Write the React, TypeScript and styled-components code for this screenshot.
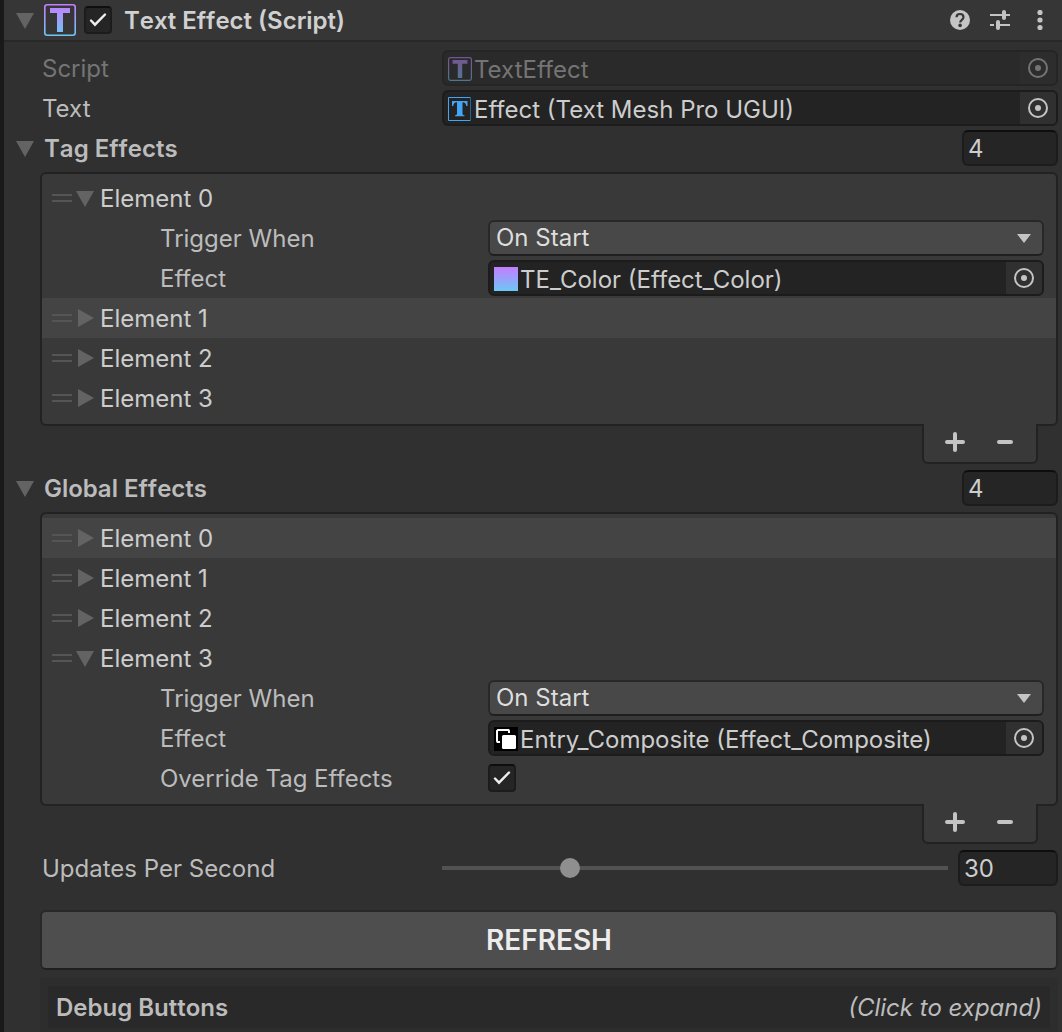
import React, { useId, useState } from "react";
import styled, { createGlobalStyle } from "styled-components";

const GlobalStyle = createGlobalStyle`
  *, *::before, *::after { box-sizing: border-box; }
  body { margin: 0; background: #303030; }
  button, input, select {
    margin: 0;
    padding: 0;
    border: 0;
    background: none;
    color: inherit;
    font: inherit;
    text-align: left;
  }
  button, select { cursor: pointer; }
  svg { display: block; flex: none; }
`;

const Panel = styled.main`
  min-height: 100vh;
  border-left: 4px solid #191919;
  background: #303030;
  color: #bcbcbc;
  font-family: Inter, "Liberation Sans", sans-serif;
  font-size: 24px;
  line-height: 32px;
`;

const Header = styled.header`
  display: flex;
  align-items: center;
  height: 42px;
  padding: 0 12px;
  border-bottom: 2px solid #282828;
  background: #363636;
`;

const FoldButton = styled.button`
  display: flex;
  align-items: center;
  justify-content: center;
  width: 18px;
  height: 32px;
  flex: none;
`;

const HeaderIdentity = styled.div`
  display: flex;
  align-items: center;
  gap: 8px;
  padding-left: 10px;
`;

const Title = styled.h1`
  margin: 0;
  padding: 2px 0 0 12px;
  flex: 1;
  color: #d0d0d0;
  font-size: 24px;
  font-weight: 600;
  font-kerning: none;
`;

const HeaderActions = styled.div`
  display: flex;
  gap: 20px;
`;

const IconButton = styled.button`
  display: flex;
  width: 20px;
  height: 20px;
  color: #c4c4c4;
`;

const Content = styled.div`
  padding: 6px 4px 0 36px;
`;

const Row = styled.div`
  display: grid;
  grid-template-columns: 402px minmax(0, 1fr);
  align-items: center;
  height: 40px;
`;

const Label = styled.label<{ $dim?: boolean }>`
  padding: 2px 0 0 2px;
  color: ${(p) => (p.$dim ? "#747474" : "#bcbcbc")};
`;

const FieldBox = styled.div<{ $dim?: boolean }>`
  display: flex;
  height: 36px;
  overflow: hidden;
  border: 2px solid ${(p) => (p.$dim ? "#252525" : "#1c1c1c")};
  border-radius: 6px;
  background: ${(p) => (p.$dim ? "#2a2a2a" : "#232323")};
  color: ${(p) => (p.$dim ? "#747474" : "#cdcdcd")};
`;

const FieldValue = styled.button`
  display: flex;
  align-items: center;
  gap: 2px;
  flex: 1;
  min-width: 0;
  padding: 2px 0 0 4px;
  white-space: nowrap;
`;

const FieldText = styled.span`
  padding-top: 2px;
`;

const Picker = styled.button<{ $dim?: boolean }>`
  display: flex;
  align-items: center;
  justify-content: center;
  width: 36px;
  flex: none;
  background: ${(p) => (p.$dim ? "#2d2d2d" : "#303030")};
  color: ${(p) => (p.$dim ? "#747474" : "#c4c4c4")};
`;

const SectionHead = styled.div`
  display: flex;
  align-items: center;
  height: 40px;
  margin-left: -24px;
`;

const SectionTitle = styled.h2`
  flex: 1;
  margin: 0;
  padding: 2px 0 0 10px;
  font-size: 24px;
  font-weight: 600;
  font-kerning: none;
`;

const NumberBox = styled.input<{ $width: number }>`
  width: ${(p) => p.$width}px;
  height: 36px;
  padding-left: 4px;
  border: 2px solid #1c1c1c;
  border-top-color: #0e0e0e;
  border-radius: 6px;
  background: #252525;
  color: #cdcdcd;
`;

const ListBlock = styled.section`
  padding: 4px 0;
`;

const ListBody = styled.ul`
  margin: 0;
  padding: 4px 0 6px;
  list-style: none;
  border: 2px solid #222222;
  border-radius: 6px;
  background: #393939;
`;

const ItemHead = styled.div<{ $selected: boolean }>`
  display: flex;
  align-items: center;
  height: 40px;
  padding-left: 10px;
  background: ${(p) => (p.$selected ? "#444444" : "transparent")};
  color: #cdcdcd;
`;

const Handle = styled.span`
  width: 20px;
  height: 8px;
  margin-right: 4px;
  border: solid #555555;
  border-width: 2px 0;
  cursor: grab;
`;

const ItemName = styled.span`
  padding: 2px 0 0 6px;
`;

const PropertyRow = styled.div`
  display: grid;
  grid-template-columns: 330px minmax(0, 1fr);
  align-items: center;
  height: 40px;
  padding: 0 12px 0 116px;
`;

const Overlap = styled.div`
  display: grid;
  align-items: center;

  & > * { grid-area: 1 / 1; }
  & > svg { pointer-events: none; }
`;

const SelectWrap = styled(Overlap)`
  & > svg {
    justify-self: end;
    margin-right: 13px;
  }
`;

const Select = styled.select`
  appearance: none;
  width: 100%;
  height: 36px;
  padding: 0 36px 2px 6px;
  border: 2px solid #282828;
  border-bottom-color: #1f1f1f;
  border-radius: 6px;
  background: #484848;
  color: #dedede;
`;

const CheckWrap = styled(Overlap)`
  width: 28px;
  justify-items: center;
`;

const CheckInput = styled.input`
  appearance: none;
  width: 28px;
  height: 28px;
  border: 2px solid #1c1c1c;
  border-top-color: #0e0e0e;
  border-radius: 4px;
  background: #252525;

  &:not(:checked) + svg { visibility: hidden; }
`;

const ListFooter = styled.div`
  display: flex;
  width: 116px;
  height: 40px;
  margin: -2px 20px 0 auto;
  padding: 0 6px 2px;
  position: relative;
  border: 2px solid #222222;
  border-top: 0;
  border-radius: 0 0 6px 6px;
  background: #393939;
  color: #c4c4c4;
`;

const FooterButton = styled.button`
  display: flex;
  flex: 1 1 0;
  align-items: center;
  justify-content: center;
`;

const SliderRow = styled.div`
  display: flex;
  align-items: center;
  gap: 10px;
`;

const Slider = styled.input`
  appearance: none;
  flex: 1;
  min-width: 0;
  height: 20px;

  &::-webkit-slider-runnable-track {
    height: 4px;
    background: #525252;
  }
  &::-webkit-slider-thumb {
    appearance: none;
    width: 20px;
    height: 20px;
    margin-top: -8px;
    border-radius: 50%;
    background: #8f8f8f;
  }
`;

const RefreshButton = styled.button`
  display: block;
  width: 100%;
  height: 60px;
  margin-top: 22px;
  border: 2px solid #282828;
  border-bottom-color: #1f1f1f;
  border-radius: 6px;
  background: #4e4e4e;
  color: #ececec;
  font-size: 28px;
  font-weight: 600;
  text-align: center;
`;

const DebugBox = styled.section`
  margin-top: 8px;
  padding: 8px 8px 4px;
  background: #2d2d2d;
`;

const DebugToggle = styled.button`
  display: flex;
  align-items: center;
  justify-content: space-between;
  width: 100%;
  height: 42px;
  padding: 2px 8px 0;
  background: #292929;
`;

const DebugTitle = styled.strong`
  font-weight: 600;
  font-kerning: none;
`;

const DebugHint = styled.em`
  font-style: italic;
`;

function Fold({ open, label, onClick }: { open: boolean; label: string; onClick: () => void }) {
  return (
    <FoldButton type="button" aria-label={label} aria-expanded={open} onClick={onClick}>
      <svg width="18" height="18" viewBox="0 0 18 18" fill="#636363">
        <path d={open ? "M0 2h18L9 18z" : "M2 0v18l16-9z"} />
      </svg>
    </FoldButton>
  );
}

function ScriptIcon({ size, faded }: { size: number; faded?: boolean }) {
  const id = useId();
  return (
    <svg width={size} height={size} viewBox="0 0 32 32" opacity={faded ? 0.5 : 1}>
      <defs>
        <linearGradient id={id} gradientUnits="userSpaceOnUse" x1="0" y1="0" x2="0" y2="32">
          <stop offset="0" stopColor="#c57cff" />
          <stop offset="1" stopColor="#6cc8f5" />
        </linearGradient>
      </defs>
      <rect x="0.8" y="0.8" width="30.4" height="30.4" rx="2.5" fill="none" stroke={`url(#${id})`} strokeWidth="1.6" />
      <path d="M6 4h20v5h-7v19h-6V9H6z" fill={`url(#${id})`} />
    </svg>
  );
}

function TextMeshIcon() {
  return (
    <svg width="24" height="24" viewBox="0 0 24 24">
      <path d="M22.500.5H.5v23h22" fill="none" stroke="#42a5f5" />
      <path d="M22.500 0v24" stroke="#28628f" />
      <path
        d="M4 4h15.500v5h-1.200C18 6.500 17 5.300 14.500 5.200V16.500c0 1.300.6 1.700 2 1.800v1H7v-1c1.400-.1 2-.5 2-1.800V5.200C6.500 5.300 5.500 6.500 5.200 9H4z"
        fill="#42a5f5"
      />
    </svg>
  );
}

function GradientIcon() {
  const id = useId();
  return (
    <svg width="24" height="24" viewBox="0 0 24 24">
      <defs>
        <linearGradient id={id} x1="0" y1="0" x2="0" y2="1">
          <stop offset="0" stopColor="#c57cff" />
          <stop offset="1" stopColor="#6cc8f5" />
        </linearGradient>
      </defs>
      <rect width="24" height="24" fill={`url(#${id})`} />
    </svg>
  );
}

function CompositeIcon() {
  return (
    <svg width="24" height="24" viewBox="0 0 24 24">
      <rect width="24" height="24" fill="#000" />
      <path d="M6 15H3.500L3 14V4l1-1h10.500l.5 1v2" fill="none" stroke="#fff" strokeWidth="2" />
      <rect x="8" y="8" width="14" height="14" rx="1.500" fill="#fff" />
    </svg>
  );
}

function TargetIcon() {
  return (
    <svg width="20" height="20" viewBox="0 0 20 20">
      <circle cx="10" cy="10" r="9" fill="none" stroke="currentColor" strokeWidth="2" />
      <circle cx="10" cy="10" r="3" fill="currentColor" />
    </svg>
  );
}

function HelpIcon() {
  return (
    <svg width="20" height="20" viewBox="0 0 20 20">
      <circle cx="10" cy="10" r="10" fill="currentColor" />
      <path d="M6.500 7.300C6.500 5 8 4 10 4s3.500 1.200 3.500 3.200c0 2.600-3.300 2.600-3.300 5.300" fill="none" stroke="#363636" strokeWidth="2.200" />
      <circle cx="10.100" cy="15.400" r="1.800" fill="#363636" />
    </svg>
  );
}

function PresetIcon() {
  return (
    <svg width="20" height="20" viewBox="0 0 20 20" stroke="currentColor" fill="none">
      <path d="M0 5h12M16 5h4M0 15h4M9 15h11" strokeWidth="2" />
      <path d="M14 2v6M8 12v6" strokeWidth="4" strokeLinecap="round" />
    </svg>
  );
}

function MenuIcon() {
  return (
    <svg width="20" height="20" viewBox="0 0 20 20" fill="currentColor">
      <circle cx="10" cy="2.500" r="2.600" />
      <circle cx="10" cy="10" r="2.600" />
      <circle cx="10" cy="17.500" r="2.600" />
    </svg>
  );
}

function Checkbox({ id, label }: { id?: string; label?: string }) {
  return (
    <CheckWrap>
      <CheckInput type="checkbox" id={id} aria-label={label} defaultChecked />
      <svg width="18" height="16" viewBox="0 0 18 16">
        <path d="M2 8.500l4 4.200L16 2.500" fill="none" stroke="#f0f0f0" strokeWidth="2.400" strokeLinecap="round" />
      </svg>
    </CheckWrap>
  );
}

type ObjectFieldProps = { id: string; icon: React.ReactNode; value: string; dim?: boolean };

function ObjectField({ id, icon, value, dim }: ObjectFieldProps) {
  return (
    <FieldBox $dim={dim}>
      <FieldValue id={id} type="button" disabled={dim}>
        {icon}
        <FieldText>{value}</FieldText>
      </FieldValue>
      <Picker type="button" $dim={dim} disabled={dim} aria-label="Select object">
        <TargetIcon />
      </Picker>
    </FieldBox>
  );
}

type Effect = { icon: React.ReactNode; value: string; override?: boolean };

function ElementItem({ index, selected, effect }: { index: number; selected: boolean; effect?: Effect }) {
  const id = useId();
  const [open, setOpen] = useState(Boolean(effect));
  return (
    <li>
      <ItemHead $selected={selected}>
        <Handle />
        <Fold open={open} label={`Element ${index}`} onClick={() => setOpen(!open)} />
        <ItemName>Element {index}</ItemName>
      </ItemHead>
      {open && effect && (
        <>
          <PropertyRow>
            <Label htmlFor={`${id}-when`}>Trigger When</Label>
            <SelectWrap>
              <Select id={`${id}-when`} defaultValue="On Start">
                <option>On Start</option>
              </Select>
              <svg width="14" height="9" viewBox="0 0 14 9">
                <path d="M0 0h14L7 9z" fill="#c4c4c4" />
              </svg>
            </SelectWrap>
          </PropertyRow>
          <PropertyRow>
            <Label htmlFor={`${id}-effect`}>Effect</Label>
            <ObjectField id={`${id}-effect`} icon={effect.icon} value={effect.value} />
          </PropertyRow>
          {effect.override && (
            <PropertyRow>
              <Label htmlFor={`${id}-override`}>Override Tag Effects</Label>
              <Checkbox id={`${id}-override`} />
            </PropertyRow>
          )}
        </>
      )}
    </li>
  );
}

type EffectListProps = { title: string; selected: number; effects: (Effect | undefined)[] };

function EffectList({ title, selected, effects }: EffectListProps) {
  const [open, setOpen] = useState(true);
  return (
    <>
      <SectionHead>
        <Fold open={open} label={title} onClick={() => setOpen(!open)} />
        <SectionTitle>{title}</SectionTitle>
        <NumberBox $width={96} aria-label={`${title} size`} inputMode="numeric" defaultValue={effects.length} />
      </SectionHead>
      {open && (
        <ListBlock>
          <ListBody>
            {effects.map((effect, i) => (
              <ElementItem key={i} index={i} selected={i === selected} effect={effect} />
            ))}
          </ListBody>
          <ListFooter>
            <FooterButton type="button" aria-label="Add element">
              <svg width="20" height="20" viewBox="0 0 20 20" stroke="currentColor" strokeWidth="4" strokeLinecap="round">
                <path d="M2 10h16M10 2v16" />
              </svg>
            </FooterButton>
            <FooterButton type="button" aria-label="Remove element">
              <svg width="16" height="20" viewBox="0 0 16 20" stroke="currentColor" strokeWidth="4" strokeLinecap="round">
                <path d="M2 10h12" />
              </svg>
            </FooterButton>
          </ListFooter>
        </ListBlock>
      )}
    </>
  );
}

export default function App() {
  const [open, setOpen] = useState(true);
  const [rate, setRate] = useState(30);
  return (
    <>
      <GlobalStyle />
      <Panel>
        <Header>
          <Fold open={open} label="Text Effect" onClick={() => setOpen(!open)} />
          <HeaderIdentity>
            <ScriptIcon size={32} />
            <Checkbox label="Enabled" />
          </HeaderIdentity>
          <Title>Text Effect (Script)</Title>
          <HeaderActions>
            <IconButton type="button" aria-label="Help"><HelpIcon /></IconButton>
            <IconButton type="button" aria-label="Presets"><PresetIcon /></IconButton>
            <IconButton type="button" aria-label="More"><MenuIcon /></IconButton>
          </HeaderActions>
        </Header>
        {open && (
          <Content>
            <Row>
              <Label $dim htmlFor="script">Script</Label>
              <ObjectField id="script" dim icon={<ScriptIcon size={24} faded />} value="TextEffect" />
            </Row>
            <Row>
              <Label htmlFor="text">Text</Label>
              <ObjectField id="text" icon={<TextMeshIcon />} value="Effect (Text Mesh Pro UGUI)" />
            </Row>
            <EffectList
              title="Tag Effects"
              selected={1}
              effects={[
                { icon: <GradientIcon />, value: "TE_Color (Effect_Color)" },
                undefined,
                undefined,
                undefined,
              ]}
            />
            <EffectList
              title="Global Effects"
              selected={0}
              effects={[
                undefined,
                undefined,
                undefined,
                { icon: <CompositeIcon />, value: "Entry_Composite (Effect_Composite)", override: true },
              ]}
            />
            <Row>
              <Label htmlFor="rate">Updates Per Second</Label>
              <SliderRow>
                <Slider
                  id="rate"
                  type="range"
                  min={1}
                  max={120}
                  value={rate}
                  onChange={(e) => setRate(Number(e.target.value))}
                />
                <NumberBox
                  $width={100}
                  aria-label="Updates Per Second value"
                  inputMode="numeric"
                  value={rate}
                  onChange={(e) => setRate(Number(e.target.value) || 0)}
                />
              </SliderRow>
            </Row>
            <RefreshButton type="button">REFRESH</RefreshButton>
            <DebugBox>
              <DebugToggle type="button" aria-expanded={false}>
                <DebugTitle>Debug Buttons</DebugTitle>
                <DebugHint>(Click to expand)</DebugHint>
              </DebugToggle>
            </DebugBox>
          </Content>
        )}
      </Panel>
    </>
  );
}
